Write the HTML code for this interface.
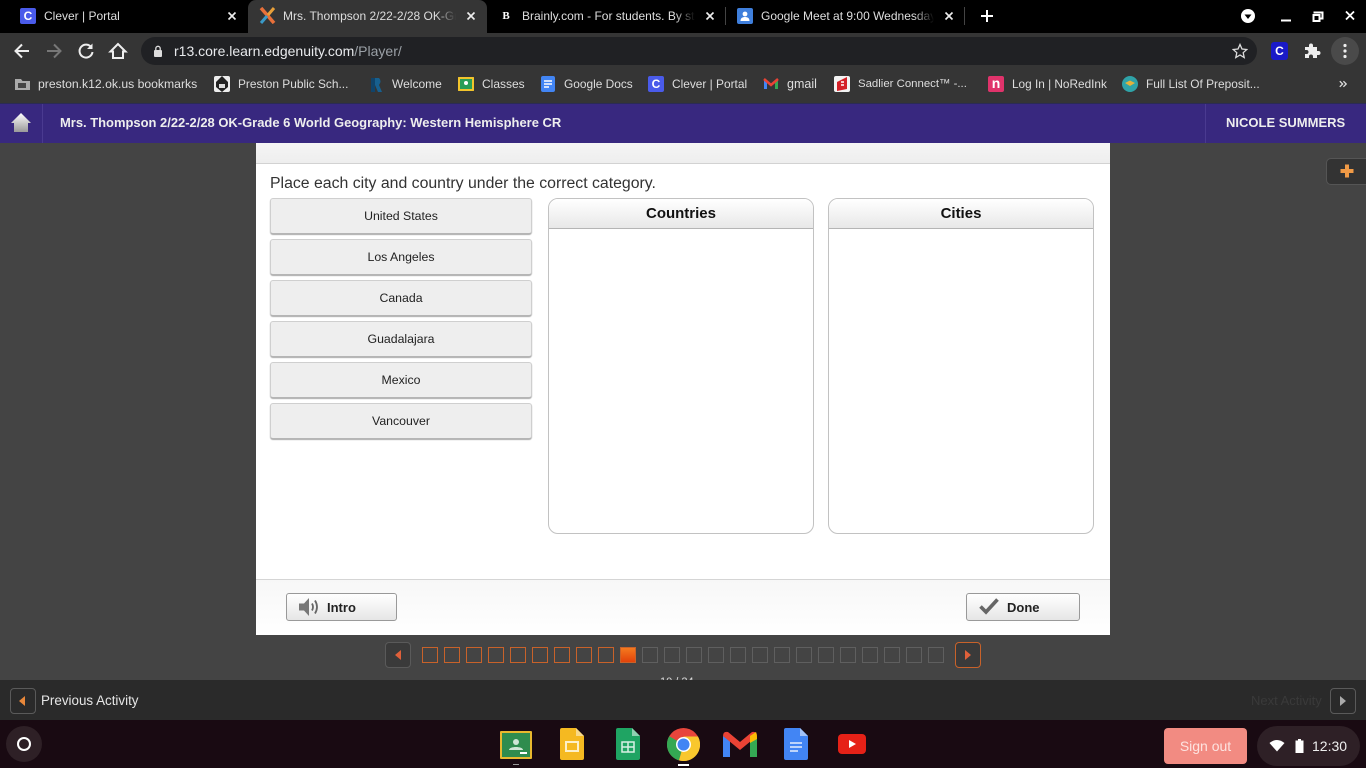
<!DOCTYPE html>
<html><head><meta charset="utf-8"><title>Edgenuity</title>
<style>
*{box-sizing:border-box}
html,body{margin:0;padding:0;width:1366px;height:768px;overflow:hidden;background:#444;font-family:"Liberation Sans",sans-serif}
.a{position:absolute}
.t{position:absolute;white-space:nowrap;overflow:hidden;font-size:12px;color:#dedede;line-height:16px}
.x{position:absolute;top:10px;width:12px;height:12px}
.bm{position:absolute;top:76px;width:16px;height:16px;border-radius:2px}
.item{position:absolute;left:270px;width:262px;height:36px;background:#eee;border:1px solid #cfcfcf;border-bottom:1px solid #b5b5b5;border-radius:3px;box-shadow:0 1px 1px #aaa;text-align:center;font-size:12.3px;line-height:34px;color:#222}
.col{position:absolute;top:198px;width:266px;height:336px;border:1px solid #c2c2c2;border-radius:10px;background:#fff}
.col div{height:30px;border-bottom:1px solid #b5b5b5;border-radius:9px 9px 0 0;background:linear-gradient(#fff,#e8e8e8);text-align:center;font-weight:bold;font-size:15px;line-height:30px;color:#111}
.sq{position:absolute;top:647px;width:16px;height:16px;border:1px solid #c8622a}
.sq.g{border-color:#5f5f5f}
.btn{position:absolute;top:593px;height:28px;border:1px solid #999;border-radius:3px;background:linear-gradient(#fff,#e6e6e6);font-weight:bold;font-size:13px;line-height:28px;color:#222}
.nav{position:absolute;width:26px;height:26px;border-radius:4px;background:#3a3a3a;border:1px solid #5a5a5a}
</style></head><body>

<!-- tab strip -->
<div class="a" style="left:0;top:0;width:1366px;height:33px;background:#000"></div>
<div class="a" style="left:248px;top:0;width:239px;height:33px;background:#353535;border-radius:8px 8px 0 0"></div>
<div class="a" style="left:20px;top:8px;width:16px;height:16px;background:#4a5bea;border-radius:2px;color:#fff;font:bold 12px/16px 'Liberation Sans',sans-serif;text-align:center">C</div>
<div class="t" style="left:44px;top:8px;width:180px">Clever | Portal</div>
<svg class="x" style="left:226px" viewBox="0 0 12 12"><path d="M2.500 2.500L9.500 9.500M9.500 2.500L2.500 9.500" stroke="#eee" stroke-width="1.600"/></svg>
<svg class="a" style="left:259px;top:7px" width="17" height="17" viewBox="0 0 17 17"><path d="M2 1L15 16" stroke="#e8703a" stroke-width="3.500"/><path d="M15 1L9 8" stroke="#e8a03a" stroke-width="3"/><path d="M2 16L8 9" stroke="#3a9ac8" stroke-width="3"/></svg>
<div class="t" style="left:283px;top:8px;width:173px;color:#ddd">Mrs. Thompson 2/22-2/28 OK-Grade</div>
<div class="a" style="left:436px;top:6px;width:20px;height:20px;background:linear-gradient(90deg,rgba(53,53,53,0),#353535)"></div>
<svg class="x" style="left:465px" viewBox="0 0 12 12"><path d="M2.500 2.500L9.500 9.500M9.500 2.500L2.500 9.500" stroke="#eee" stroke-width="1.600"/></svg>
<div class="a" style="left:498px;top:8px;width:16px;height:16px;color:#fff;font:bold 11px/16px 'Liberation Serif',serif;text-align:center">B</div>
<div class="t" style="left:522px;top:8px;width:173px">Brainly.com - For students. By students.</div>
<div class="a" style="left:675px;top:6px;width:20px;height:20px;background:linear-gradient(90deg,rgba(0,0,0,0),#000)"></div>
<svg class="x" style="left:704px" viewBox="0 0 12 12"><path d="M2.500 2.500L9.500 9.500M9.500 2.500L2.500 9.500" stroke="#eee" stroke-width="1.600"/></svg>
<div class="a" style="left:725px;top:7px;width:1px;height:18px;background:#444"></div>
<svg class="a" style="left:737px;top:8px" width="16" height="16" viewBox="0 0 16 16"><rect width="16" height="16" rx="2" fill="#3f7fdc"/><circle cx="8" cy="6" r="2.400" fill="#fff"/><path d="M3.500 13c0-3 2-4 4.500-4s4.500 1 4.500 4z" fill="#fff"/></svg>
<div class="t" style="left:761px;top:8px;width:173px">Google Meet at 9:00 Wednesday</div>
<div class="a" style="left:914px;top:6px;width:20px;height:20px;background:linear-gradient(90deg,rgba(0,0,0,0),#000)"></div>
<svg class="x" style="left:943px" viewBox="0 0 12 12"><path d="M2.500 2.500L9.500 9.500M9.500 2.500L2.500 9.500" stroke="#eee" stroke-width="1.600"/></svg>
<div class="a" style="left:964px;top:7px;width:1px;height:18px;background:#444"></div>
<svg class="a" style="left:980px;top:9px" width="14" height="14" viewBox="0 0 14 14"><path d="M7 1V13M1 7H13" stroke="#fff" stroke-width="2"/></svg>
<svg class="a" style="left:1241px;top:9px" width="14" height="14" viewBox="0 0 14 14"><circle cx="7" cy="7" r="7" fill="#fff"/><path d="M3.500 5.500H10.500L7 10z" fill="#000"/></svg>
<svg class="a" style="left:1279px;top:9px" width="80" height="14" viewBox="0 0 80 14"><path d="M2 11.500H12" stroke="#fff" stroke-width="2"/><path d="M34.500 3.500H43.500V9.500H41M34.500 6H40.500V12H34.500z" fill="none" stroke="#fff" stroke-width="2"/><path d="M67 2.500L75 10.500M75 2.500L67 10.500" stroke="#fff" stroke-width="1.800"/></svg>

<!-- toolbar -->
<div class="a" style="left:0;top:33px;width:1366px;height:70px;background:#353535"></div>
<svg class="a" style="left:12px;top:41px" width="20" height="20" viewBox="0 0 20 20"><path d="M17 10H4M10 3.500L3.500 10L10 16.500" fill="none" stroke="#eee" stroke-width="2"/></svg>
<svg class="a" style="left:44px;top:41px" width="20" height="20" viewBox="0 0 20 20"><path d="M3 10H16M10 3.500L16.500 10L10 16.500" fill="none" stroke="#777" stroke-width="2"/></svg>
<svg class="a" style="left:76px;top:41px" width="20" height="20" viewBox="0 0 20 20"><path d="M15.500 6.500A6.500 6.500 0 1 0 16.500 11" fill="none" stroke="#eee" stroke-width="2"/><path d="M16.500 2.500V8H11z" fill="#eee"/></svg>
<svg class="a" style="left:108px;top:41px" width="20" height="20" viewBox="0 0 20 20"><path d="M10 3L2.500 10.500H5V17H15V10.500H17.500z" fill="none" stroke="#eee" stroke-width="2"/></svg>
<div class="a" style="left:141px;top:37px;width:1116px;height:28px;background:#202124;border-radius:14px"></div>
<svg class="a" style="left:152px;top:45px" width="12" height="13" viewBox="0 0 12 13"><rect x="2" y="5" width="8" height="7" rx="1" fill="#ddd"/><path d="M3.800 5V3.500a2.200 2.200 0 0 1 4.400 0V5" fill="none" stroke="#ddd" stroke-width="1.300"/></svg>
<div class="t" style="left:174px;top:43px;font-size:14px;color:#e8eaed">r13.core.learn.edgenuity.com<span style="color:#9aa0a6">/Player/</span></div>
<svg class="a" style="left:1232px;top:43px" width="16" height="16" viewBox="0 0 16 16"><path d="M8 1.500L10 6L14.800 6.500L11.200 9.700L12.200 14.500L8 12L3.800 14.500L4.800 9.700L1.200 6.500L6 6z" fill="none" stroke="#ddd" stroke-width="1.300"/></svg>
<div class="a" style="left:1271px;top:42px;width:17px;height:18px;background:#1a1ac8;border-radius:3px;color:#fff;font:bold 12px/18px 'Liberation Sans',sans-serif;text-align:center">C</div>
<svg class="a" style="left:1303px;top:42px" width="18" height="18" viewBox="0 0 18 18"><path d="M2 5H6V3.500a2 2 0 0 1 4 0V5H14V9H15.500a2 2 0 0 1 0 4H14V16H10V14.500a2 2 0 0 0-4 0V16H2V12H3.500a2 2 0 0 0 0-4H2z" fill="#eee"/></svg>
<div class="a" style="left:1331px;top:37px;width:28px;height:28px;border-radius:14px;background:#4a4a4a"></div>
<svg class="a" style="left:1343px;top:43px" width="4" height="16" viewBox="0 0 4 16"><circle cx="2" cy="2.500" r="1.600" fill="#eee"/><circle cx="2" cy="8" r="1.600" fill="#eee"/><circle cx="2" cy="13.500" r="1.600" fill="#eee"/></svg>

<!-- bookmarks -->
<svg class="a" style="left:15px;top:77px" width="15" height="14" viewBox="0 0 15 14"><path d="M0 2H6L7.500 4H15V13H0z" fill="#aaa"/><rect x="3" y="6" width="8" height="5" fill="#444"/></svg>
<div class="t" style="left:38px;top:76px;font-size:12.2px">preston.k12.ok.us bookmarks</div>
<svg class="bm" style="left:214px" viewBox="0 0 16 16"><rect width="16" height="16" fill="#eee"/><path d="M8 0L14 6V11L8 16L2 11V6z" fill="#222"/><rect x="5" y="8" width="6" height="4" fill="#ddd"/></svg>
<div class="t" style="left:238px;top:76px;font-size:11.9px">Preston Public Sch...</div>
<svg class="bm" style="left:368px" viewBox="0 0 16 16"><path d="M3 2H7V16H3z" fill="#10446b"/><path d="M7 2H11Q14 5 11 9L14 16H10L7 9z" fill="#17608f"/></svg>
<div class="t" style="left:392px;top:76px">Welcome</div>
<svg class="bm" style="left:458px" viewBox="0 0 16 16"><rect y="1" width="16" height="14" fill="#f2c42c"/><rect x="2" y="3" width="12" height="10" fill="#2a9d57"/><circle cx="8" cy="7" r="2" fill="#fff"/></svg>
<div class="t" style="left:482px;top:76px">Classes</div>
<svg class="bm" style="left:540px" viewBox="0 0 16 16"><rect x="1" width="14" height="16" rx="2" fill="#4285f4"/><path d="M4 5H12M4 8H12M4 11H9" stroke="#fff" stroke-width="1.500"/></svg>
<div class="t" style="left:564px;top:76px;font-size:11.9px">Google Docs</div>
<div class="bm" style="left:648px;background:#4a5bea;color:#fff;font:bold 12px/16px 'Liberation Sans',sans-serif;text-align:center">C</div>
<div class="t" style="left:672px;top:76px;font-size:11.9px">Clever | Portal</div>
<svg class="bm" style="left:763px" viewBox="0 0 16 16"><path d="M1 3V13H4V7z" fill="#4285f4"/><path d="M15 3V13H12V7z" fill="#34a853"/><path d="M1 3L8 9L15 3" fill="none" stroke="#ea4335" stroke-width="2.500"/></svg>
<div class="t" style="left:787px;top:76px;font-size:12.5px">gmail</div>
<svg class="bm" style="left:834px" viewBox="0 0 16 16"><rect width="16" height="16" fill="#f3f3f3"/><path d="M3 6L13 1V13L3 15z" fill="#d42027"/><path d="M7 6H10M7 9H10" stroke="#fff" stroke-width="1.500"/></svg>
<div class="t" style="left:858px;top:76px;font-size:11.4px">Sadlier Connect™ -...</div>
<div class="bm" style="left:988px;background:#e0336b;color:#fff;font:bold 14px/15px 'Liberation Sans',sans-serif;text-align:center">n</div>
<div class="t" style="left:1012px;top:76px;font-size:11.8px">Log In | NoRedInk</div>
<svg class="bm" style="left:1122px" viewBox="0 0 16 16"><circle cx="8" cy="8" r="8" fill="#2fa3a8"/><path d="M3 7L8 4.500L13 7L8 10z" fill="#e3b23c"/></svg>
<div class="t" style="left:1146px;top:76px;font-size:11.9px">Full List Of Preposit...</div>
<svg class="a" style="left:1339px;top:80px" width="8" height="8" viewBox="0 0 10 10"><path d="M1 1.500L4.500 5L1 8.500M5.500 1.500L9 5L5.500 8.500" fill="none" stroke="#ddd" stroke-width="1.600"/></svg>

<!-- purple header -->
<div class="a" style="left:0;top:103px;width:1366px;height:40px;background:#38287f;border-top:1px solid #2b2b55"></div>
<div class="a" style="left:42px;top:104px;width:1px;height:39px;background:#4a3a90"></div>
<div class="a" style="left:1205px;top:104px;width:1px;height:39px;background:#4a3a90"></div>
<svg class="a" style="left:10px;top:112px" width="22" height="21" viewBox="0 0 22 21"><defs><linearGradient id="h" x1="0" y1="0" x2="0" y2="1"><stop offset="0" stop-color="#fff"/><stop offset="1" stop-color="#999"/></linearGradient></defs><path d="M11 1L21 11H18V20H4V11H1z" fill="url(#h)"/></svg>
<div class="t" style="left:60px;top:115px;font-size:12.96px;font-weight:bold;color:#eee">Mrs. Thompson 2/22-2/28 OK-Grade 6 World Geography: Western Hemisphere CR</div>
<div class="t" style="left:1226px;top:115px;font-size:13px;font-weight:bold;color:#eee">NICOLE SUMMERS</div>

<!-- plus tab -->
<div class="a" style="left:1326px;top:158px;width:45px;height:27px;background:#333;border:1px solid #555;border-radius:5px"></div>
<svg class="a" style="left:1339px;top:163px" width="16" height="16" viewBox="0 0 16 16"><path d="M8 1.500V14.500M1.500 8H14.500" stroke="#f09a46" stroke-width="4"/></svg>

<!-- player -->
<div class="a" style="left:256px;top:143px;width:854px;height:492px;background:#fff"></div>
<div class="a" style="left:256px;top:143px;width:854px;height:21px;background:linear-gradient(#f5f5f5,#eeeeee);border-bottom:1px solid #d2d2d2"></div>
<div class="t" style="left:270px;top:174px;font-size:15.84px;line-height:19px;color:#333">Place each city and country under the correct category.</div>
<div class="item" style="top:198px">United States</div>
<div class="item" style="top:239px">Los Angeles</div>
<div class="item" style="top:280px">Canada</div>
<div class="item" style="top:321px">Guadalajara</div>
<div class="item" style="top:362px">Mexico</div>
<div class="item" style="top:403px">Vancouver</div>
<div class="col" style="left:548px"><div>Countries</div></div>
<div class="col" style="left:828px"><div>Cities</div></div>
<div class="a" style="left:256px;top:579px;width:854px;height:56px;background:linear-gradient(#f7f7f7,#fff);border-top:1px solid #d5d5d5"></div>
<div class="btn" style="left:286px;width:111px;padding-left:40px">Intro</div>
<svg class="a" style="left:298px;top:597px" width="22" height="20" viewBox="0 0 22 20"><path d="M1 6.500H6L11 1V19L6 13.500H1z" fill="#777"/><path d="M14 6.500Q16 10 14 13.500M17 3.500Q21 10 17 16.500" fill="none" stroke="#666" stroke-width="1.800"/></svg>
<div class="btn" style="left:966px;width:114px;padding-left:40px">Done</div>
<svg class="a" style="left:979px;top:597px" width="20" height="18" viewBox="0 0 20 18"><path d="M1.500 9.500L7 15L18.500 2.500" fill="none" stroke="#666" stroke-width="3.600"/></svg>

<!-- pagination -->
<div class="nav" style="left:385px;top:642px"></div>
<svg class="a" style="left:393px;top:649px" width="10" height="12" viewBox="0 0 10 12"><path d="M8 1V11L2 6z" fill="#e0603a"/></svg>
<div class="sq" style="left:422px"></div><div class="sq" style="left:444px"></div><div class="sq" style="left:466px"></div><div class="sq" style="left:488px"></div><div class="sq" style="left:510px"></div><div class="sq" style="left:532px"></div><div class="sq" style="left:554px"></div><div class="sq" style="left:576px"></div><div class="sq" style="left:598px"></div>
<div class="sq" style="left:620px;background:linear-gradient(#f47a1f,#e2420a)"></div>
<div class="sq g" style="left:642px"></div><div class="sq g" style="left:664px"></div><div class="sq g" style="left:686px"></div><div class="sq g" style="left:708px"></div><div class="sq g" style="left:730px"></div><div class="sq g" style="left:752px"></div><div class="sq g" style="left:774px"></div><div class="sq g" style="left:796px"></div><div class="sq g" style="left:818px"></div><div class="sq g" style="left:840px"></div><div class="sq g" style="left:862px"></div><div class="sq g" style="left:884px"></div><div class="sq g" style="left:906px"></div><div class="sq g" style="left:928px"></div>
<div class="nav" style="left:955px;top:642px;border-color:#c8622a"></div>
<svg class="a" style="left:963px;top:649px" width="10" height="12" viewBox="0 0 10 12"><path d="M2 1V11L8 6z" fill="#e0603a"/></svg>
<div class="t" style="left:660px;top:677px;height:3px;font-size:11px;color:#ddd;line-height:10px">10 / 24</div>

<!-- activity bar -->
<div class="a" style="left:0;top:680px;width:1366px;height:40px;background:#2a2a2a"></div>
<div class="nav" style="left:10px;top:688px;background:#2a2a2a"></div>
<svg class="a" style="left:17px;top:695px" width="10" height="12" viewBox="0 0 10 12"><path d="M8 1V11L2 6z" fill="#e8873a"/></svg>
<div class="t" style="left:41px;top:693px;font-size:13.4px;color:#e6e6e6">Previous Activity</div>
<div class="t" style="left:1251px;top:693px;font-size:13px;color:#3a3a3a">Next Activity</div>
<div class="nav" style="left:1330px;top:688px;background:#2a2a2a"></div>
<svg class="a" style="left:1338px;top:695px" width="10" height="12" viewBox="0 0 10 12"><path d="M2 1V11L8 6z" fill="#aaa"/></svg>

<!-- shelf -->
<div class="a" style="left:0;top:720px;width:1366px;height:48px;background:#190a12"></div>
<div class="a" style="left:6px;top:726px;width:36px;height:36px;border-radius:18px;background:#2e2026"></div>
<div class="a" style="left:17px;top:737px;width:14px;height:14px;border-radius:7px;border:2px solid #fff"></div>
<svg class="a" style="left:500px;top:731px" width="32" height="28" viewBox="0 0 32 28"><rect width="32" height="28" rx="1" fill="#e8b92e"/><rect x="2" y="2" width="28" height="24" fill="#2f8c4e"/><circle cx="16" cy="11" r="3" fill="#cfe6d5"/><path d="M9 19c0-4 14-4 14 0z" fill="#cfe6d5"/><rect x="20" y="21" width="7" height="2" fill="#fff"/></svg>
<div class="a" style="left:513px;top:764px;width:6px;height:1px;background:#999"></div>
<svg class="a" style="left:560px;top:728px" width="24" height="32" viewBox="0 0 24 32"><path d="M2 0H16L24 8V30a2 2 0 0 1-2 2H2a2 2 0 0 1-2-2V2a2 2 0 0 1 2-2z" fill="#f5b921"/><path d="M16 0L24 8H16z" fill="#f8d98a"/><rect x="6" y="14" width="12" height="9" fill="none" stroke="#fdf0c8" stroke-width="2"/></svg>
<svg class="a" style="left:616px;top:728px" width="24" height="32" viewBox="0 0 24 32"><path d="M2 0H16L24 8V30a2 2 0 0 1-2 2H2a2 2 0 0 1-2-2V2a2 2 0 0 1 2-2z" fill="#1fa463"/><path d="M16 0L24 8H16z" fill="#8ed1b1"/><path d="M6 14H18V24H6zM6 19H18M12 14V24" fill="none" stroke="#d8f0e4" stroke-width="1.500"/></svg>
<svg class="a" style="left:667px;top:728px" width="33" height="33" viewBox="0 0 33 33"><circle cx="16.500" cy="16.500" r="16.500" fill="#e8453c"/><path d="M16.500 16.500L2.200 8.200A16.500 16.500 0 0 0 12 32.400z" fill="#34a853"/><path d="M16.500 16.500L12 32.400A16.500 16.500 0 0 0 31 8.500L16.500 8.500z" fill="#f9c72d"/><circle cx="16.500" cy="16.500" r="7.500" fill="#fff"/><circle cx="16.500" cy="16.500" r="6" fill="#4285f4"/></svg>
<div class="a" style="left:678px;top:764px;width:11px;height:2px;background:#fff"></div>
<svg class="a" style="left:723px;top:731px" width="34" height="26" viewBox="0 0 34 26"><path d="M0 5V26H7V10z" fill="#4285f4"/><path d="M34 5V26H27V10z" fill="#34a853"/><path d="M0 5Q0 0 5 1L17 11L29 1Q34 0 34 5L17 19z" fill="#ea4335"/><path d="M27 5L33 1Q34 3 34 8L27 12z" fill="#fbbc04"/></svg>
<svg class="a" style="left:784px;top:728px" width="24" height="32" viewBox="0 0 24 32"><path d="M2 0H16L24 8V30a2 2 0 0 1-2 2H2a2 2 0 0 1-2-2V2a2 2 0 0 1 2-2z" fill="#4285f4"/><path d="M16 0L24 8H16z" fill="#a1c2fa"/><path d="M6 15H18M6 19H18M6 23H14" stroke="#e6effd" stroke-width="1.600"/></svg>
<svg class="a" style="left:838px;top:734px" width="28" height="20" viewBox="0 0 28 20"><rect width="28" height="20" rx="4" fill="#e62117"/><path d="M11 6V14L18 10z" fill="#fff"/></svg>
<div class="a" style="left:1164px;top:728px;width:83px;height:36px;background:#f28b82;border-radius:4px;color:#fde3e0;font-size:14px;line-height:36px;text-align:center">Sign out</div>
<div class="a" style="left:1257px;top:726px;width:103px;height:40px;background:#2e2026;border-radius:20px"></div>
<svg class="a" style="left:1269px;top:739px" width="16" height="13" viewBox="0 0 16 13"><path d="M0.500 4Q8 -2 15.500 4L8 12.500z" fill="#fff"/></svg>
<svg class="a" style="left:1295px;top:739px" width="9" height="14" viewBox="0 0 9 14"><path d="M3 0H6V1.500H8.500V14H0.500V1.500H3z" fill="#fff"/></svg>
<div class="t" style="left:1312px;top:737px;font-size:14px;color:#eee;line-height:18px">12:30</div>

</body></html>
